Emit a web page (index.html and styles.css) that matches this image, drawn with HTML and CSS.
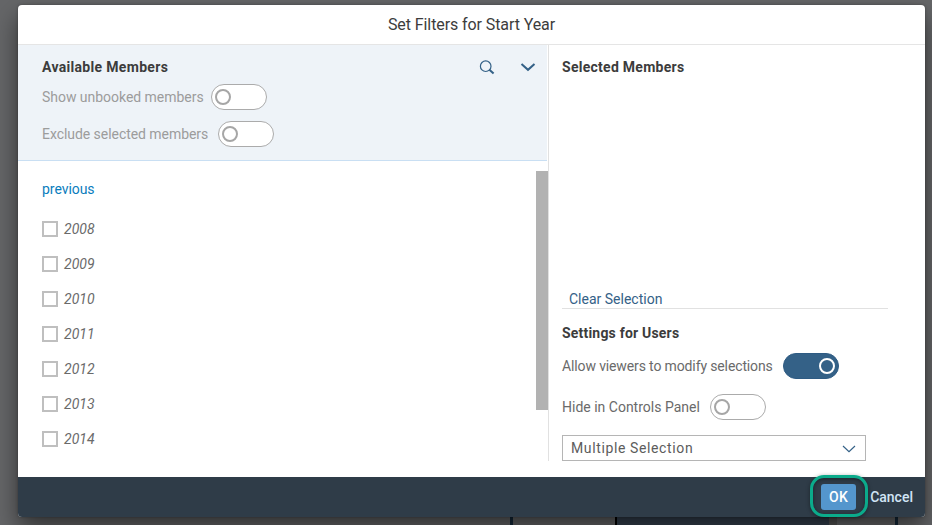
FILE: index.html
```
<!DOCTYPE html>
<html lang="en">
<head>
<meta charset="utf-8">
<title>Set Filters for Start Year</title>
<link rel="stylesheet" href="styles.css">
</head>
<body>
<div class="backdrop">
  <i class="bar bar-tick"></i><i class="bar bar-panel"></i><i class="bar bar-edge"></i><i class="bar bar-tick bar-tick-right"></i>
</div>
<section class="dialog">
  <header class="title">Set Filters for Start Year</header>
  <main class="content">
    <div class="available">
      <div class="options">
        <div class="heading-row">
          <h2 class="heading heading-available">Available Members</h2>
          <svg class="icon search" width="16" height="16" viewBox="0 0 16 16"><circle cx="6.7" cy="6.2" r="5.3"/><path class="handle" d="M10.4 9.8L14.6 13.6"/></svg>
          <svg class="icon expand" width="16" height="16" viewBox="0 0 16 16"><path d="M1.5 4L8 9.8L14.5 4"/></svg>
        </div>
        <div class="switch-row"><span class="label label-show">Show unbooked members</span><span class="switch"><i class="knob"></i></span></div>
        <div class="switch-row switch-row-exclude"><span class="label label-exclude">Exclude selected members</span><span class="switch"><i class="knob"></i></span></div>
      </div>
      <div class="members">
        <div class="list">
          <a class="previous">previous</a>
          <div class="member"><i class="checkbox"></i><span>2008</span></div>
          <div class="member"><i class="checkbox"></i><span>2009</span></div>
          <div class="member"><i class="checkbox"></i><span>2010</span></div>
          <div class="member"><i class="checkbox"></i><span>2011</span></div>
          <div class="member"><i class="checkbox"></i><span>2012</span></div>
          <div class="member"><i class="checkbox"></i><span>2013</span></div>
          <div class="member"><i class="checkbox"></i><span>2014</span></div>
        </div>
        <div class="scrollbar"></div>
      </div>
    </div>
    <div class="selected">
      <h2 class="heading heading-selected">Selected Members</h2>
      <div class="clear"><a>Clear Selection</a></div>
      <h2 class="heading heading-settings">Settings for Users</h2>
      <div class="switch-row setting-allow"><span class="label label-allow">Allow viewers to modify selections</span><span class="switch on"><i class="knob"></i></span></div>
      <div class="switch-row setting-hide"><span class="label label-hide">Hide in Controls Panel</span><span class="switch"><i class="knob"></i></span></div>
      <div class="select"><span>Multiple Selection</span><svg class="icon caret" width="14" height="10" viewBox="0 0 14 10"><path d="M1 2L7 7.6L13 2"/></svg></div>
    </div>
  </main>
  <footer class="footer"><button class="ok">OK</button><a class="cancel">Cancel</a></footer>
</section>
</body>
</html>
```
FILE: styles.css
```
* { box-sizing: border-box; }
body {
  margin: 0;
  width: 932px;
  height: 525px;
  overflow: hidden;
  padding: 5px 7px 8px 18px;
  background: #656668;
  color: #6a6a6a;
  font: 14px/20px Roboto, "Noto Sans", sans-serif;
  white-space: nowrap;
}
.backdrop {
  position: absolute;
  inset: 515px 0 0 0;
  display: flex;
}
.bar { height: 10px; background: #15293a; }
.bar-tick { width: 3px; margin-left: 510px; }
.bar-panel { width: 214px; margin-left: 102px; border-left: 2px solid #000; background: #35414f; }
.bar-edge { width: 8px; background: #555; }
.bar-tick-right { margin-left: 58px; }
.dialog {
  position: relative;
  display: flex;
  flex-direction: column;
  width: 907px;
  height: 512px;
  border-radius: 4px;
  background: #fff;
  box-shadow: 0 12px 24px rgba(0, 0, 0, .5), 0 0 3px rgba(0, 0, 0, .3);
}
.title {
  height: 40px;
  border-bottom: 1px solid #e5e5e5;
  color: #3c3c3c;
  font-size: 16px;
  line-height: 39px;
  letter-spacing: -.09px;
  text-align: center;
}
.content { display: flex; height: 432px; }
.available {
  display: flex;
  flex-direction: column;
  width: 531px;
  height: 416px;
  border-right: 1px solid #e1e1e1;
}
.options {
  width: 529px;
  height: 116px;
  padding: 12px 11px 0 24px;
  border-bottom: 1px solid #c9dff3;
  background: #eef3f8;
}
.heading-row { display: flex; align-items: center; height: 21px; }
.heading { margin: 0; color: #3c3c3c; font-size: 14px; line-height: 21px; font-weight: 700; }
.heading-available { letter-spacing: .32px; }
.heading-selected { letter-spacing: .27px; }
.heading-settings { margin-top: 14px; letter-spacing: .2px; }
.icon { fill: none; stroke: #346187; stroke-width: 1.2; }
.handle { stroke-width: 2; }
.search { margin-left: auto; }
.expand { margin-left: 25px; stroke-width: 2; }
.switch-row { display: flex; align-items: center; height: 26px; margin-top: 6px; }
.switch-row-exclude { margin-top: 11px; }
.options .label { color: #9c9c9c; }
.label-show { width: 169px; letter-spacing: -.03px; }
.label-exclude { width: 176px; letter-spacing: -.05px; }
.switch {
  display: flex;
  align-items: center;
  width: 56px;
  height: 26px;
  padding: 0 3px;
  border: 1px solid #ababab;
  border-radius: 13px;
  background: #fff;
}
.knob { width: 16px; height: 16px; border: 2px solid #a6a6a6; border-radius: 50%; }
.on { justify-content: flex-end; border-color: #2e5b83; background: #346187; }
.on .knob { border-color: #fff; }
.members { display: flex; justify-content: space-between; padding-top: 10px; height: 300px; }
.list { padding: 8px 0 0 24px; }
.previous { display: block; height: 22px; margin-bottom: 10px; color: #0a7dbd; letter-spacing: -.05px; }
.member {
  display: flex;
  align-items: center;
  gap: 6px;
  height: 35px;
  font-style: italic;
}
.checkbox { width: 16px; height: 16px; border: 2px solid #bfbfbf; }
.scrollbar { width: 12px; height: 239px; background: #b2b2b2; }
.selected { width: 326px; margin-left: 13px; padding-top: 12px; }
.clear {
  height: 23px;
  margin-top: 208px;
  padding: 1px 7px 0;
  border-bottom: 1px solid #e1e1e1;
  color: #346187;
  line-height: 24px;
}
.setting-allow { margin-top: 9px; }
.label-allow { width: 221px; letter-spacing: -.13px; }
.setting-hide { margin-top: 15px; }
.label-hide { width: 148px; }
.select {
  display: flex;
  align-items: center;
  justify-content: space-between;
  width: 304px;
  height: 26px;
  margin-top: 15px;
  padding: 0 9px 0 8px;
  border: 1px solid #b5b5b5;
  color: #5c5c5c;
  letter-spacing: .62px;
}
.caret { margin-top: 1px; }
.footer {
  display: flex;
  align-items: center;
  justify-content: flex-end;
  height: 40px;
  padding-right: 12px;
  border-radius: 0 0 4px 4px;
  background: #2f3c48;
}
.ok {
  position: relative;
  width: 35px;
  height: 26px;
  padding: 0;
  border: 0;
  border-radius: 3px;
  background: #5496cd;
  color: #fff;
  font: 500 14px/26px Roboto, sans-serif;
  letter-spacing: .5px;
}
.ok::after {
  content: "";
  position: absolute;
  inset: -9px -12px -7px -11px;
  border: 3px solid #0bab8b;
  border-radius: 14px;
  box-shadow: 0 1px 4px rgba(0, 0, 0, .4), inset 0 1px 4px rgba(0, 0, 0, .4);
}
.cancel { margin-left: 14px; color: #d1e4f5; font-weight: 500; }
```
